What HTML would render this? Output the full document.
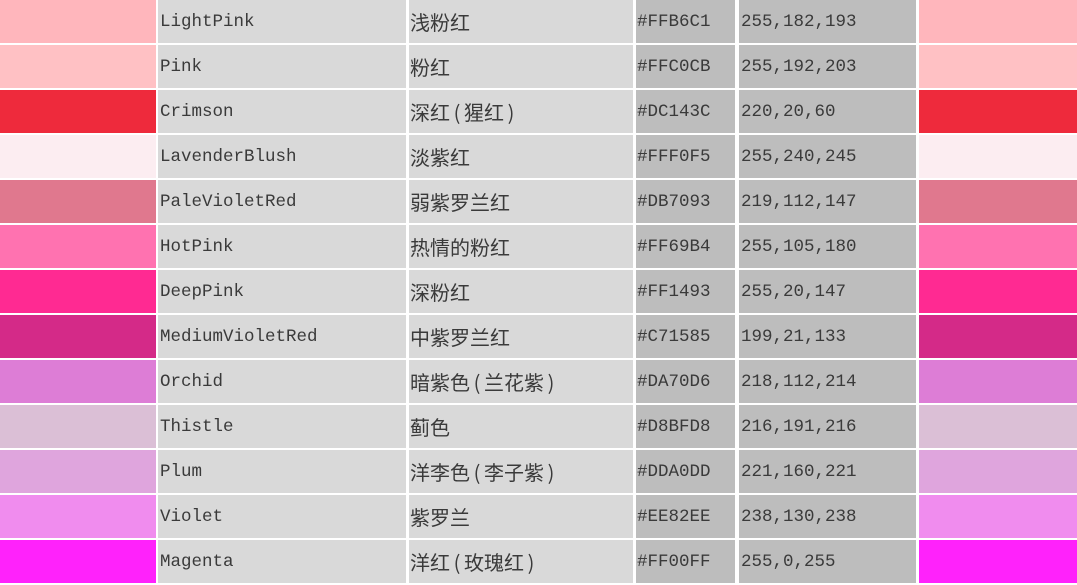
<!DOCTYPE html>
<html><head><meta charset="utf-8"><style>
body{margin:0;width:1077px;height:583px;background:#fff;overflow:hidden;position:relative;font-family:"Liberation Mono","Noto Sans CJK SC",monospace;color:#3a3a3a}
.c{position:absolute;height:43px;line-height:45px;box-sizing:border-box;white-space:nowrap}
.n{left:158px;width:248px;background:#d9d9d9;padding-left:2px;font-size:17.5px}
.z{left:409px;width:224px;background:#d9d9d9;padding-left:1px;font-size:20px;line-height:43px;font-family:"Noto Sans CJK SC","WenQuanYi Zen Hei",sans-serif}
.z i{font-style:normal;display:inline-block;width:14px;text-align:center}
.h{left:636px;width:99px;background:#bdbdbd;padding-left:1px;font-size:17.5px}
.r{left:739px;width:177px;background:#bdbdbd;padding-left:2px;font-size:17.5px}
.s1{left:0;width:156px}.s2{left:919px;width:158px}
</style></head><body>
<script>
const rows=[["LightPink","浅粉红","#FFB6C1","255,182,193","#ffb6bc"],
["Pink","粉红","#FFC0CB","255,192,203","#ffc1c4"],
["Crimson","深红(猩红)","#DC143C","220,20,60","#ee2a3c"],
["LavenderBlush","淡紫红","#FFF0F5","255,240,245","#fcedf1"],
["PaleVioletRed","弱紫罗兰红","#DB7093","219,112,147","#e0788e"],
["HotPink","热情的粉红","#FF69B4","255,105,180","#ff72b0"],
["DeepPink","深粉红","#FF1493","255,20,147","#ff2a92"],
["MediumVioletRed","中紫罗兰红","#C71585","199,21,133","#d42a88"],
["Orchid","暗紫色(兰花紫)","#DA70D6","218,112,214","#dd7dd6"],
["Thistle","蓟色","#D8BFD8","216,191,216","#dbbfd6"],
["Plum","洋李色(李子紫)","#DDA0DD","221,160,221","#dfa5dd"],
["Violet","紫罗兰","#EE82EE","238,130,238","#f08cee"],
["Magenta","洋红(玫瑰红)","#FF00FF","255,0,255","#ff22fb"]];
let h='';
rows.forEach((r,i)=>{const t=i*45;
const z=r[1].replace('(','<i>(</i>').replace(')','<i>)</i>');
h+=`<div class="c s1" style="top:${t}px;background:${r[4]}"></div>`+
`<div class="c n" style="top:${t}px">${r[0]}</div>`+
`<div class="c z" style="top:${t}px">${z}</div>`+
`<div class="c h" style="top:${t}px">${r[2]}</div>`+
`<div class="c r" style="top:${t}px">${r[3]}</div>`+
`<div class="c s2" style="top:${t}px;background:${r[4]}"></div>`;});
document.body.innerHTML=h;
</script>
</body></html>
